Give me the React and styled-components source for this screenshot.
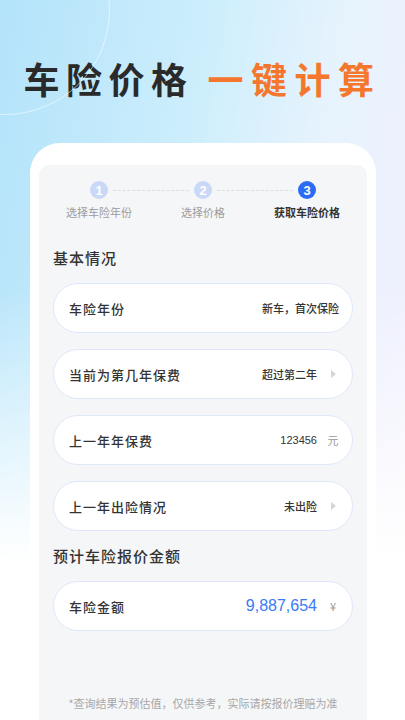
import React from "react";
import styled, { createGlobalStyle } from "styled-components";

const GlobalStyle = createGlobalStyle`
  html, body {
    margin: 0;
    padding: 0;
  }
  body {
    font-family: "Noto Sans CJK SC", "Noto Sans", sans-serif;
    color: #333;
  }
`;

const steps = [
  { no: 1, label: "选择车险年份" },
  { no: 2, label: "选择价格" },
  { no: 3, label: "获取车险价格", active: true },
];

const basics = [
  { label: "车险年份", value: "新车，首次保险" },
  { label: "当前为第几年保费", value: "超过第二年", trail: "arrow" },
  { label: "上一年年保费", value: "123456", trail: "元", num: true },
  { label: "上一年出险情况", value: "未出险", trail: "arrow" },
];

const Page = styled.div`
  position: relative;
  width: 405px;
  height: 720px;
  overflow: hidden;
  display: flex;
  flex-direction: column;
  background:
    linear-gradient(180deg, rgba(255, 255, 255, 0) 40%, #fff 78%),
    linear-gradient(100deg, #b3e3fa 0%, #cdeefc 40%, #e6f3fd 65%, #eef0fd 85%, #f4f3fd 100%);

  &::before {
    content: "";
    position: absolute;
    left: -100px;
    top: -95px;
    width: 208px;
    height: 208px;
    border-radius: 50%;
    border: 1.5px solid rgba(255, 255, 255, 0.55);
  }
`;

const Title = styled.h1`
  margin: 0;
  height: 143px;
  display: flex;
  align-items: center;
  justify-content: center;
  padding-top: 12px;
  box-sizing: border-box;
  font-size: 36px;
  font-weight: 700;
  letter-spacing: 6.5px;
  color: #2a2a2a;
  white-space: nowrap;
`;

const Accent = styled.span`
  color: #f5772d;
  letter-spacing: 7.5px;
  margin-left: 14px;
`;

const Phone = styled.div`
  flex: 1;
  margin: 0 29px 0 30px;
  padding: 22px 9px 0;
  background: #fff;
  border-radius: 30px 30px 0 0;
  display: flex;
`;

const Screen = styled.div`
  flex: 1;
  background: #f5f6f8;
  border-radius: 10px 10px 0 0;
  padding: 16px 14px 0;
  display: flex;
  flex-direction: column;
`;

const Steps = styled.div`
  margin: 0 -14px;
  display: grid;
  grid-template-columns: repeat(3, 104px);
  justify-content: center;
`;

const Step = styled.div`
  position: relative;
  display: flex;
  flex-direction: column;
  align-items: center;
  gap: 5px;

  &:not(:last-child)::after {
    content: "";
    position: absolute;
    top: 9px;
    left: calc(50% + 14px);
    width: 76px;
    border-top: 1px dashed #dadde4;
  }
`;

const Dot = styled.div`
  width: 18px;
  height: 18px;
  border-radius: 50%;
  background: ${(p) => (p.$active ? "#2c6cf3" : "#c9d8f7")};
  color: #fff;
  font-family: "Liberation Sans", sans-serif;
  font-size: 13px;
  font-weight: 700;
  display: flex;
  align-items: center;
  justify-content: center;
`;

const StepLabel = styled.div`
  font-size: 11px;
  line-height: 16px;
  color: ${(p) => (p.$active ? "#333" : "#9c9c9c")};
  font-weight: ${(p) => (p.$active ? 700 : 400)};
`;

const SectionTitle = styled.h2`
  margin: ${(p) => p.$top}px 0 14px;
  font-size: 15px;
  line-height: 22px;
  font-weight: 500;
  letter-spacing: 1px;
  color: #333;
`;

const List = styled.div`
  display: flex;
  flex-direction: column;
  gap: 16px;
`;

const Row = styled.div`
  height: 50px;
  box-sizing: border-box;
  border: 1px solid #dfe7fb;
  border-radius: 25px;
  background: #fff;
  display: flex;
  align-items: center;
  padding: 0 13px 0 15px;
`;

const Label = styled.div`
  flex: 1;
  font-size: 13px;
  font-weight: 500;
  letter-spacing: 1px;
  color: #333;
`;

const Value = styled.div`
  font-size: ${(p) => (p.$big ? "16px" : "11px")};
  font-family: ${(p) =>
    p.$num ? '"Liberation Sans", "Noto Sans CJK SC", sans-serif' : "inherit"};
  font-weight: ${(p) => (p.$big ? 400 : 500)};
  color: ${(p) => (p.$big ? "#3a7bf5" : "#333")};
`;

const Trail = styled.div`
  width: 12px;
  margin-left: 10px;
  display: flex;
  justify-content: center;
  font-size: 11px;
  color: #999;
`;

const Note = styled.p`
  margin: 64px 0 0;
  text-align: center;
  font-size: 11px;
  color: #a8a8a8;
`;

const Arrow = () => (
  <svg width="5" height="8" viewBox="0 0 5 8">
    <polygon points="0,0 5,4 0,8" fill="#d4d6da" />
  </svg>
);

export default function App() {
  return (
    <Page>
      <GlobalStyle />
      <Title>
        车险价格<Accent>一键计算</Accent>
      </Title>
      <Phone>
        <Screen>
          <Steps>
            {steps.map((s) => (
              <Step key={s.no}>
                <Dot $active={s.active}>{s.no}</Dot>
                <StepLabel $active={s.active}>{s.label}</StepLabel>
              </Step>
            ))}
          </Steps>

          <SectionTitle $top={27}>基本情况</SectionTitle>
          <List>
            {basics.map((r) => (
              <Row key={r.label}>
                <Label>{r.label}</Label>
                <Value $num={r.num}>{r.value}</Value>
                {r.trail && (
                  <Trail>{r.trail === "arrow" ? <Arrow /> : r.trail}</Trail>
                )}
              </Row>
            ))}
          </List>

          <SectionTitle $top={14}>预计车险报价金额</SectionTitle>
          <Row>
            <Label>车险金额</Label>
            <Value $num $big>
              9,887,654
            </Value>
            <Trail>¥</Trail>
          </Row>

          <Note>*查询结果为预估值，仅供参考，实际请按报价理赔为准</Note>
        </Screen>
      </Phone>
    </Page>
  );
}
